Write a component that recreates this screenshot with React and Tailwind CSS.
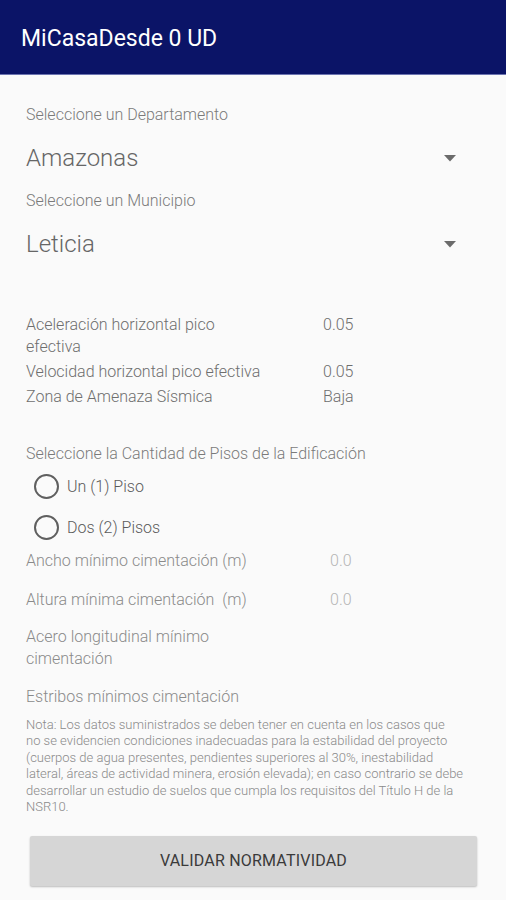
import React, { useState } from 'react';

const font = { fontFamily: 'Roboto, "Liberation Sans", sans-serif' };

const Caret = () => (
  <svg width="12" height="7" viewBox="0 0 12 7">
    <path d="M0 0 L12 0 L6 6.5 Z" fill="#6b6b6b" />
  </svg>
);

const Spinner = ({ value }) => (
  <div className="flex items-center justify-between h-[48px] pr-[24px]">
    <span className="text-[24px] text-[#666] font-light">{value}</span>
    <Caret />
  </div>
);

const Radio = ({ label, checked, onClick }) => (
  <button type="button" onClick={onClick} className="flex items-center h-[41px] pl-[8px] gap-[8px] font-light">
    <span className="w-[25px] h-[25px] rounded-full border-2 border-[#5f5f5f] flex items-center justify-center">
      {checked && <span className="w-[13px] h-[13px] rounded-full bg-[#0b1467]" />}
    </span>
    <span className="text-[16px] text-[#5a5a5a]">{label}</span>
  </button>
);

const App = () => {
  const [pisos, setPisos] = useState(null);

  return (
    <div className="min-h-[900px] bg-[#fafafa]" style={font}>
      <header className="h-[75px] bg-[#0b1467] border-b border-[#6c74b0] flex items-center px-[21px] pt-[5px]">
        <h1 className="text-[23px] text-white">MiCasaDesde 0 UD</h1>
      </header>

      <main className="px-[26px] pt-[28px]">
        <p className="text-[16px] text-[#7a7a7a] font-light leading-[24px]">Seleccione un Departamento</p>
        <div className="mt-[7px]">
          <Spinner value="Amazonas" />
        </div>
        <p className="text-[16px] text-[#7a7a7a] font-light leading-[24px] mt-[7px]">Seleccione un Municipio</p>
        <div className="mt-[7px]">
          <Spinner value="Leticia" />
        </div>

        <div className="mt-[46px] text-[16px] text-[#6e6e6e] font-light leading-[22px]">
          <div className="flex">
            <span className="w-[297px]">Aceleración horizontal pico<br />efectiva</span>
            <span>0.05</span>
          </div>
          <div className="flex mt-[3px]">
            <span className="w-[297px]">Velocidad horizontal pico efectiva</span>
            <span>0.05</span>
          </div>
          <div className="flex mt-[3px]">
            <span className="w-[297px]">Zona de Amenaza Sísmica</span>
            <span>Baja</span>
          </div>
        </div>

        <p className="mt-[35px] text-[16px] text-[#7a7a7a] font-light leading-[22px]">
          Seleccione la Cantidad de Pisos de la Edificación
        </p>
        <div className="flex flex-col mt-[1px]">
          <Radio label="Un (1) Piso" checked={pisos === 1} onClick={() => setPisos(1)} />
          <Radio label="Dos (2) Pisos" checked={pisos === 2} onClick={() => setPisos(2)} />
        </div>

        <div className="text-[16px] text-[#8a8a8a] font-light leading-[22px]">
          <div className="flex mt-[2px]">
            <span className="w-[304px]">Ancho mínimo cimentación (m)</span>
            <span className="text-[#b5b5b5]">0.0</span>
          </div>
          <div className="flex mt-[17px]">
            <span className="w-[304px]">Altura mínima cimentación&nbsp;&nbsp;(m)</span>
            <span className="text-[#b5b5b5]">0.0</span>
          </div>
          <p className="mt-[15px]">Acero longitudinal mínimo<br />cimentación</p>
          <p className="mt-[16px]">Estribos mínimos cimentación</p>
        </div>

        <p className="mt-[9px] text-[13px] leading-[16.4px] text-[#8a8a8a] font-light whitespace-nowrap">
          Nota: Los datos suministrados se deben tener en cuenta en los casos que<br />
          no se evidencien condiciones inadecuadas para la estabilidad del proyecto<br />
          (cuerpos de agua presentes, pendientes superiores al 30%, inestabilidad<br />
          lateral, áreas de actividad minera, erosión elevada); en caso contrario se debe<br />
          desarrollar un estudio de suelos que cumpla los requisitos del Título H de la<br />
          NSR10.
        </p>

        <div className="mt-[21px] pl-[4px] pr-[3px]">
          <button
            type="button"
            className="w-full h-[50px] bg-[#d6d6d6] rounded-[2px] shadow-[0_1px_2px_rgba(0,0,0,0.25)] text-[16px] text-[#3a3a3a] tracking-[0.2px]"
          >
            VALIDAR NORMATIVIDAD
          </button>
        </div>
      </main>
    </div>
  );
};

export default App;
